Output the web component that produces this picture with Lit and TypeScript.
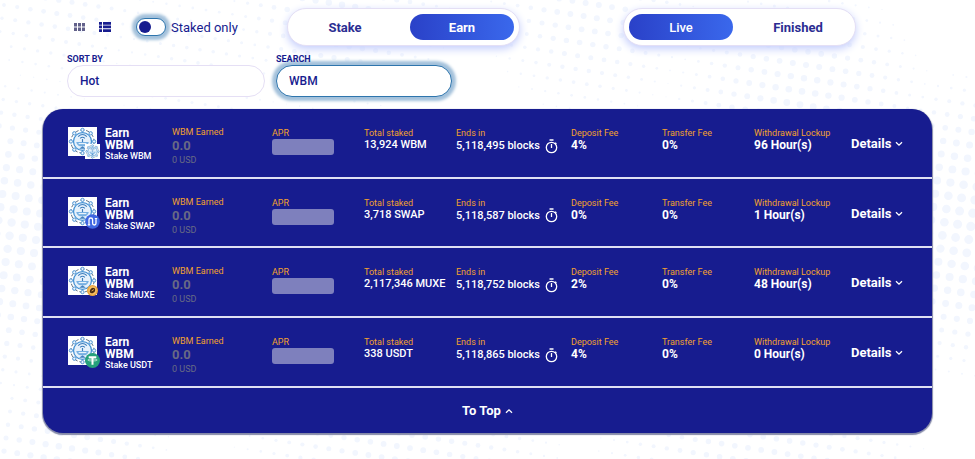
import { LitElement, html, svg, css } from "lit";
import { customElement, property } from "lit/decorators.js";

interface Pool {
  stake: string;
  total: string;
  blocks: string;
  deposit: string;
  transfer: string;
  lockup: string;
}

const POOLS: Pool[] = [
  { stake: "WBM", total: "13,924", blocks: "5,118,495", deposit: "4%", transfer: "0%", lockup: "96 Hour(s)" },
  { stake: "SWAP", total: "3,718", blocks: "5,118,587", deposit: "0%", transfer: "0%", lockup: "1 Hour(s)" },
  { stake: "MUXE", total: "2,117,346", blocks: "5,118,752", deposit: "2%", transfer: "0%", lockup: "48 Hour(s)" },
  { stake: "USDT", total: "338", blocks: "5,118,865", deposit: "4%", transfer: "0%", lockup: "0 Hour(s)" },
];

/* Halftone backdrop: a tilted lattice whose dots swell around a few centres. */
const SWELLS = [
  { x: 0, y: 235, r: 175, size: 4.2 },
  { x: 985, y: 225, r: 170, size: 4.6 },
  { x: 800, y: 115, r: 150, size: 3.4 },
  { x: 590, y: 10, r: 120, size: 3 },
  { x: 340, y: 0, r: 130, size: 3.2 },
  { x: 60, y: -10, r: 110, size: 2.6 },
  { x: 60, y: 480, r: 130, size: 3.4 },
  { x: 400, y: 480, r: 190, size: 3 },
  { x: 760, y: 480, r: 190, size: 3 },
  { x: 200, y: 60, r: 110, size: 1.8 },
];

function halftone() {
  const dots = [];
  for (let i = -8; i < 86; i++) {
    for (let j = -16; j < 40; j++) {
      const x = 4 + i * 13.2 - j * 2;
      const y = 5 + i * 2.1 + j * 13.2;
      if (x < -6 || x > 982 || y < -6 || y > 466) continue;
      let r = 0;
      for (const s of SWELLS) {
        const d = Math.hypot(x - s.x, y - s.y) / s.r;
        if (d < 1) r = Math.max(r, s.size * (1 - d * d));
      }
      if (r > 0.6) dots.push(svg`<circle cx=${x.toFixed(1)} cy=${y.toFixed(1)} r=${r.toFixed(1)} />`);
    }
  }
  return dots;
}

@customElement("token-seal")
export class TokenSeal extends LitElement {
  static styles = css`
    :host { display: block; }
    svg { display: block; width: 100%; height: 100%; }
  `;
  render() {
    const nodes = [0, 45, 90, 135, 180, 225, 270, 315].map((a) => {
      const t = (a * Math.PI) / 180;
      return svg`<circle cx=${15 + 12 * Math.cos(t)} cy=${15 + 12 * Math.sin(t)} r="1.7" fill="#eaf4fc" stroke="#4a90cf" stroke-width="1" />`;
    });
    return html`<svg viewBox="0 0 30 30" aria-hidden="true">
      <rect width="30" height="30" fill="#fff" />
      <circle cx="15" cy="15" r="12" fill="none" stroke="#5b6b7c" stroke-width="1" stroke-dasharray="4 2" />
      <circle cx="15" cy="15" r="9.3" fill="#e6f1fb" stroke="#4391d3" stroke-width="1.3" />
      ${nodes}
      <path d="M10.500 10q4.500-4.500 9 0M12.500 11.800q2.500-2.300 5 0" fill="none" stroke="#3f7fbd" stroke-width="1.1" />
      <path d="M15 12.500v3" stroke="#3f7fbd" stroke-width="1.2" />
      <path d="M8.500 15.500h13q-1 4-4.500 4.500h-4q-3.500-.5-4.500-4.500z" fill="#76b0e2" />
      <path d="M11 17.200h8" stroke="#fff" stroke-width="1" />
      <path d="M11.500 22.500l3.500-2.500 3.500 2.500z" fill="#3f7fbd" />
    </svg>`;
  }
}

@customElement("stake-badge")
export class StakeBadge extends LitElement {
  @property() token = "";
  static styles = css`
    :host { display: block; width: 15px; height: 15px; }
    svg { display: block; width: 100%; height: 100%; }
    .small { padding: 2px; box-sizing: border-box; }
  `;
  render() {
    if (this.token === "WBM") return html`<token-seal></token-seal>`;
    if (this.token === "SWAP")
      return html`<svg viewBox="0 0 15 15" aria-hidden="true">
        <circle cx="7.5" cy="7.5" r="7.3" fill="#3f67e2" />
        <path d="M4 11V5.800q0-1.800 1.800-1.800t1.800 1.800v3.400q0 1.800 1.700 1.800t1.700-1.800V4.500" fill="none" stroke="#fff" stroke-width="1.300" />
        <path d="M2.800 10.800h2.400M9.800 4.500h2.400" stroke="#fff" stroke-width="1.200" />
      </svg>`;
    if (this.token === "MUXE")
      return html`<svg class="small" viewBox="0 0 12 12" aria-hidden="true">
        <circle cx="6" cy="6" r="6" fill="#e9a13c" />
        <circle cx="6" cy="6" r="4.600" fill="#f5be62" />
        <path d="M3 7.500Q3 4 6.500 3q2.500 0 2.500 2.500T6 9Q4 9.500 3 7.500z" fill="#4a2c12" />
        <path d="M5 6.500l2.500-1.500" stroke="#f3b454" stroke-width="1" />
      </svg>`;
    return html`<svg viewBox="0 0 15 15" aria-hidden="true">
      <circle cx="7.5" cy="7.5" r="7.5" fill="#26a17b" />
      <path d="M3.700 3.300h7.600v2H8.500v6.500h-2V5.300H3.700z" fill="#fff" />
      <ellipse cx="7.500" cy="7" rx="4.700" ry="1" fill="none" stroke="#fff" stroke-width=".6" />
    </svg>`;
  }
}

@customElement("app-root")
export class AppRoot extends LitElement {
  static styles = css`
    :host {
      display: block;
      position: relative;
      min-height: 100vh;
      box-sizing: border-box;
      padding: 8px 43px 24px;
      overflow: hidden;
      background: #fff;
      color: #171c8f;
      font-family: Roboto, "Noto Sans", sans-serif;
      font-size: 12px;
      font-weight: 500;
    }
    button, input, select { font: inherit; color: inherit; margin: 0; }
    button { border: 0; background: none; padding: 0; cursor: pointer; }
    .backdrop { position: absolute; inset: 0; width: 100%; height: 100%; fill: #f2f6fe; }
    main { position: relative; }

    .toolbar { display: flex; align-items: center; padding: 0 76px 0 31px; }
    .views { display: flex; gap: 13px; }
    .views svg { display: block; width: 12px; height: 10px; }
    .grid-view { color: #62618a; }
    .staked { display: flex; align-items: center; gap: 5px; margin-left: 25px; width: 102px; white-space: nowrap; font-size: 13px; font-weight: 400; }
    .toggle {
      appearance: none;
      box-sizing: border-box;
      flex: none;
      width: 30px;
      height: 18px;
      border: 1px solid #2e75ad;
      border-radius: 9px;
      background: #fff;
      box-shadow: 0 0 3px 4px #a3c1db;
      padding: 2px;
    }
    .toggle::before { content: ""; display: block; width: 12px; height: 12px; border-radius: 50%; background: #171c8f; }
    .tabs {
      display: flex;
      justify-content: space-between;
      box-sizing: border-box;
      width: 233px;
      height: 38px;
      padding: 5px;
      border: 1px solid #e4dff5;
      border-radius: 19px;
      background: #fff;
      box-shadow: 0 3px 9px #c3cdfc;
    }
    .tabs button { width: 104px; height: 26px; border-radius: 13px; font-size: 13px; font-weight: 700; color: #2b2d92; }
    .tabs .on { color: #fff; background: linear-gradient(90deg, #2a41c8, #3a68ec); }
    .tabs .light { font-weight: 500; }
    .mode { margin-left: 49px; }
    .status { margin-left: auto; }

    .filters { display: flex; gap: 11px; margin: 8px 0 12px 24px; }
    .field { display: flex; flex-direction: column; font-size: 9px; font-weight: 700; line-height: 11px; }
    .field select, .field input {
      appearance: none;
      box-sizing: border-box;
      height: 32px;
      padding: 0 12px;
      border: 1px solid #e5dff5;
      border-radius: 16px;
      background: #fff;
      font-size: 12px;
      font-weight: 500;
      outline: none;
    }
    .field select { width: 198px; }
    .field input { width: 176px; border-color: #2e75ad; box-shadow: 0 0 3px 4px #a3c1db; }
    .caption { position: relative; z-index: 1; }

    .card {
      border-radius: 20px;
      overflow: hidden;
      background: #171c8f;
      box-shadow: 0 1px 1px 1px #8489a8;
      color: #fff;
    }
    table { width: 100%; height: 279px; table-layout: fixed; border-collapse: collapse; }
    tr { border-bottom: 2px solid #dfe0f3; }
    td { padding: 18px 0 10px; vertical-align: top; white-space: nowrap; text-align: left; line-height: 12px; }
    .c-pool { width: 129px; }
    .c-earned { width: 100px; }
    .c-apr, .c-total, .c-transfer { width: 92px; }
    .c-ends { width: 115px; }
    .c-deposit { width: 91px; }
    .c-lockup { width: 97px; }
    .c-details { width: 81px; }
    .pool { display: flex; gap: 8px; padding-left: 25px; }
    .logo { position: relative; width: 29px; height: 29px; }
    .logo stake-badge { position: absolute; right: -3px; bottom: -3px; }
    .name { font-size: 12px; font-weight: 700; line-height: 12px; }
    .name div:last-child { font-size: 9px; font-weight: 500; line-height: 11px; }
    .label { font-size: 9px; font-weight: 400; color: #f2a12e; }
    .value { display: flex; align-items: center; font-size: 11px; height: 12px; }
    .strong { font-size: 12px; font-weight: 700; }
    .muted { color: #696a85; }
    .amount { font-size: 13px; font-weight: 700; line-height: 16px; }
    .usd { font-size: 9px; font-weight: 400; }
    .earned { padding-top: 17px; }
    .apr { width: 62px; height: 16px; border-radius: 3px; background: #7e80bd; }
    .ends { gap: 5px; height: 14px; }
    .ends svg { width: 13px; height: 15px; }
    .details { padding-top: 28px; }
    .link { display: flex; align-items: center; gap: 4px; font-size: 13px; font-weight: 700; line-height: 14px; }
    .link svg { width: 8px; height: 6px; }
    .top { justify-content: center; width: 100%; height: 45px; }
  `;

  private row(p: Pool) {
    return html`<tr>
      <td>
        <div class="pool">
          <div class="logo"><token-seal></token-seal><stake-badge token=${p.stake}></stake-badge></div>
          <div class="name"><div>Earn</div><div>WBM</div><div>Stake ${p.stake}</div></div>
        </div>
      </td>
      <td class="earned">
        <div class="label">WBM Earned</div>
        <div class="muted amount">0.0</div>
        <div class="muted usd">0 USD</div>
      </td>
      <td><div class="label">APR</div><div class="apr"></div></td>
      <td><div class="label">Total staked</div><div class="value">${p.total} ${p.stake}</div></td>
      <td>
        <div class="label">Ends in</div>
        <div class="value ends">${p.blocks} blocks
          <svg viewBox="0 0 13 15" fill="none" stroke="currentColor" stroke-width="1.300" aria-hidden="true">
            <circle cx="6.500" cy="8.500" r="5.200" /><path d="M4.500 1h4M6.500 5v4M10.200 3.700l1.200 1.200" />
          </svg>
        </div>
      </td>
      <td><div class="label">Deposit Fee</div><div class="value strong">${p.deposit}</div></td>
      <td><div class="label">Transfer Fee</div><div class="value strong">${p.transfer}</div></td>
      <td><div class="label">Withdrawal Lockup</div><div class="value strong">${p.lockup}</div></td>
      <td class="details">
        <button class="link">Details
          <svg viewBox="0 0 8 6" fill="none" stroke="currentColor" stroke-width="1.300" aria-hidden="true"><path d="M1 1.200l3 3 3-3" /></svg>
        </button>
      </td>
    </tr>`;
  }

  render() {
    return html`
      <svg class="backdrop" viewBox="0 0 975 459" preserveAspectRatio="xMinYMin slice" aria-hidden="true">${halftone()}</svg>
      <main>
        <div class="toolbar">
          <div class="views">
            <button class="grid-view" aria-label="Card view">
              <svg viewBox="0 0 12 10" fill="currentColor"><path d="M0 1h3v3.500H0zM4 1h3v3.500H4zM8 1h3v3.500H8zM0 5.500h3V9H0zM4 5.500h3V9H4zM8 5.500h3V9H8z" /></svg>
            </button>
            <button aria-label="Table view">
              <svg viewBox="0 0 12 10" fill="currentColor"><path d="M0 0h3v2.700H0zM4 0h8v2.700H4zM0 3.600h3v2.700H0zM4 3.600h8v2.700H4zM0 7.200h3V10H0zM4 7.200h8V10H4z" /></svg>
            </button>
          </div>
          <label class="staked"><input class="toggle" type="checkbox" />Staked only</label>
          <div class="tabs mode"><button>Stake</button><button class="on">Earn</button></div>
          <div class="tabs status"><button class="on light">Live</button><button>Finished</button></div>
        </div>
        <div class="filters">
          <label class="field"><span class="caption">SORT BY</span><select><option>Hot</option></select></label>
          <label class="field"><span class="caption">SEARCH</span><input type="text" value="WBM" /></label>
        </div>
        <div class="card">
          <table>
            <colgroup>
              <col class="c-pool" /><col class="c-earned" /><col class="c-apr" /><col class="c-total" /><col class="c-ends" />
              <col class="c-deposit" /><col class="c-transfer" /><col class="c-lockup" /><col class="c-details" />
            </colgroup>
            <tbody>${POOLS.map((p) => this.row(p))}</tbody>
          </table>
          <button class="link top">To Top
            <svg viewBox="0 0 8 6" fill="none" stroke="currentColor" stroke-width="1.300" aria-hidden="true"><path d="M1 4.800l3-3 3 3" /></svg>
          </button>
        </div>
      </main>
    `;
  }
}
